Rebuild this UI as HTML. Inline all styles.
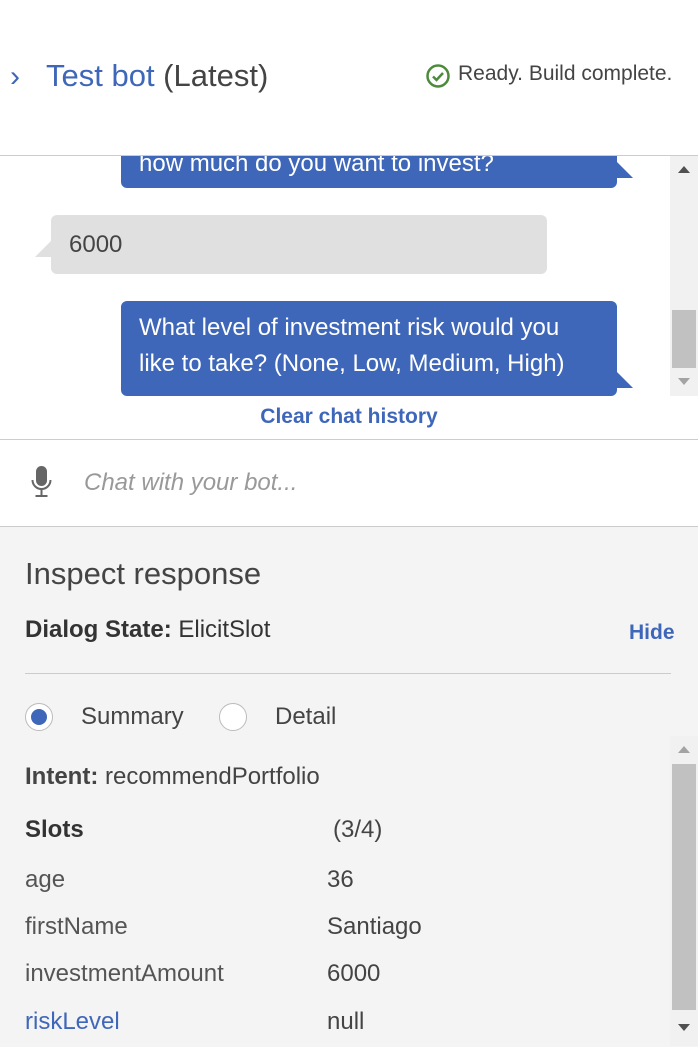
<!DOCTYPE html>
<html><head><style>
body{margin:0;width:698px;height:1046px;overflow:hidden;font-family:"Liberation Sans",sans-serif;background:#fff;position:relative}
.a{position:absolute}
.blue{background:#3f67b9;color:#fff;border-radius:6px;font-size:24px;line-height:36px}
.t{font-size:24px}
</style></head><body>
<div class="a" style="left:10px;top:60px;font-size:30px;color:#3f67b9">&#8250;</div>
<div class="a" style="left:46px;top:58px;font-size:31px;color:#444"><span style="color:#3f67b9">Test bot</span> (Latest)</div>
<svg class="a" style="left:425px;top:63px" width="26" height="26" viewBox="0 0 26 26"><circle cx="13" cy="13" r="10.5" fill="none" stroke="#4b8b3b" stroke-width="2.5"/><path d="M8 13.5l3.5 3.5 6.5-7" fill="none" stroke="#4b8b3b" stroke-width="2.5"/></svg>
<div class="a" style="left:458px;top:62px;font-size:21px;color:#444">Ready. Build complete.</div>
<div class="a" style="left:0;top:155px;width:698px;height:1px;background:#ccc"></div>
<div class="a" style="left:0;top:156px;width:670px;height:282px;overflow:hidden">
 <div class="a blue" style="left:121px;top:-30px;width:496px;height:62px;padding-left:18px;box-sizing:border-box;padding-top:20px">how much do you want to invest?</div>
 <svg class="a" style="left:615px;top:4px" width="20" height="20"><path d="M0 0L18 18H0z" fill="#3f67b9"/></svg>
 <div class="a" style="left:51px;top:59px;width:496px;height:59px;background:#e0e0e0;border-radius:6px;font-size:24px;color:#444;line-height:59px;padding-left:18px;box-sizing:border-box">6000</div>
 <svg class="a" style="left:35px;top:84px" width="18" height="18"><path d="M17 0L0 17H17z" fill="#e0e0e0"/></svg>
 <div class="a blue" style="left:121px;top:145px;width:496px;height:95px;padding:9px 18px;box-sizing:border-box">What level of investment risk would you like to take? (None, Low, Medium, High)</div>
 <svg class="a" style="left:615px;top:214px" width="20" height="20"><path d="M0 0L18 18H0z" fill="#3f67b9"/></svg>
 <div class="a" style="left:0;top:249px;width:698px;text-align:center;font-size:21px;font-weight:bold;color:#3f67b9">Clear chat history</div>
</div>
<div class="a" style="left:670px;top:156px;width:28px;height:240px;background:#f1f1f1"></div>
<div class="a" style="left:672px;top:310px;width:24px;height:58px;background:#c1c1c1"></div>
<div class="a" style="left:678px;top:166px;width:0;height:0;border-left:6px solid transparent;border-right:6px solid transparent;border-bottom:7px solid #505050"></div>
<div class="a" style="left:678px;top:378px;width:0;height:0;border-left:6px solid transparent;border-right:6px solid transparent;border-top:7px solid #a3a3a3"></div>
<div class="a" style="left:0;top:439px;width:698px;height:1px;background:#ccc"></div>
<svg class="a" style="left:30px;top:466px" width="24" height="32" viewBox="0 0 24 32"><rect x="6" y="0" width="11" height="20" rx="5.5" fill="#666"/><path d="M2.5 14c0 5 4 9 9 9s9-4 9-9" fill="none" stroke="#666" stroke-width="2"/><path d="M11.5 23v6M5.5 30h12" stroke="#666" stroke-width="2"/></svg>
<div class="a" style="left:84px;top:469px;font-size:24px;font-style:italic;color:#999">Chat with your bot...</div>
<div class="a" style="left:0;top:526px;width:698px;height:520px;background:#f4f4f4;border-top:1px solid #ccc"></div>
<div class="a" style="left:25px;top:556px;font-size:31px;color:#444">Inspect response</div>
<div class="a t" style="left:25px;top:616px;color:#333"><b>Dialog State:</b> ElicitSlot</div>
<div class="a" style="left:629px;top:621px;font-size:21px;font-weight:bold;color:#3f67b9">Hide</div>
<div class="a" style="left:25px;top:673px;width:646px;height:1px;background:#ccc"></div>
<div class="a" style="left:25px;top:703px;width:28px;height:28px;border-radius:50%;background:#fff;border:1px solid #bbb;box-sizing:border-box"></div>
<div class="a" style="left:31px;top:709px;width:16px;height:16px;border-radius:50%;background:#3f67b9"></div>
<div class="a t" style="left:81px;top:703px;color:#444">Summary</div>
<div class="a" style="left:219px;top:703px;width:28px;height:28px;border-radius:50%;background:#fff;border:1px solid #bbb;box-sizing:border-box"></div>
<div class="a t" style="left:275px;top:703px;color:#444">Detail</div>
<div class="a" style="left:670px;top:736px;width:28px;height:310px;background:#f1f1f1"></div>
<div class="a" style="left:672px;top:764px;width:24px;height:246px;background:#c1c1c1"></div>
<div class="a" style="left:678px;top:746px;width:0;height:0;border-left:6px solid transparent;border-right:6px solid transparent;border-bottom:7px solid #a3a3a3"></div>
<div class="a" style="left:678px;top:1024px;width:0;height:0;border-left:6px solid transparent;border-right:6px solid transparent;border-top:7px solid #505050"></div>
<div class="a t" style="left:25px;top:763px;color:#444"><b>Intent:</b> recommendPortfolio</div>
<div class="a t" style="left:25px;top:816px;color:#333;font-weight:bold">Slots</div>
<div class="a t" style="left:333px;top:816px;color:#444">(3/4)</div>
<div class="a t" style="left:25px;top:866px;color:#555">age</div>
<div class="a t" style="left:327px;top:866px;color:#444">36</div>
<div class="a t" style="left:25px;top:913px;color:#555">firstName</div>
<div class="a t" style="left:327px;top:913px;color:#444">Santiago</div>
<div class="a t" style="left:25px;top:960px;color:#555">investmentAmount</div>
<div class="a t" style="left:327px;top:960px;color:#444">6000</div>
<div class="a t" style="left:25px;top:1008px;color:#3f67b9">riskLevel</div>
<div class="a t" style="left:327px;top:1008px;color:#444">null</div>
</body></html>
